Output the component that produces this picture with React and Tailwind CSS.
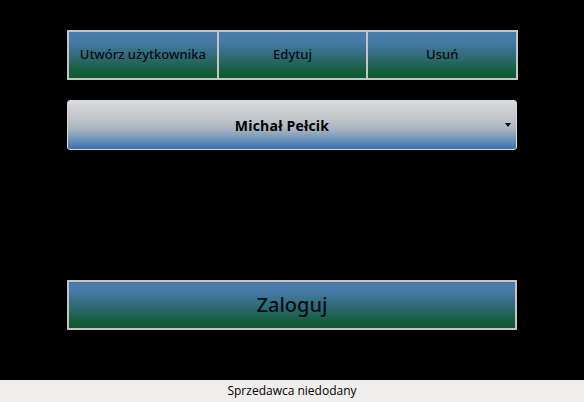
import React from "react";

const green = "bg-[linear-gradient(to_bottom,#4a7bac_0%,#467aa8_20%,#2f6a72_55%,#145c3e_85%,#0e5a32_100%)]";

export default function App() {
  return (
    <div
      className="w-[584px] h-[402px] bg-black flex flex-col"
      style={{ fontFamily: '"Open Sans", "Noto Sans", sans-serif' }}
    >
      <div className="flex-1 flex flex-col pl-[67px] pt-[30px]">
        {/* Zakładki */}
        <div className="flex w-[451px] h-[50px]">
          {["Utwórz użytkownika", "Edytuj", "Usuń"].map((t, i) => (
            <button
              key={t}
              className={`${green} flex-1 flex items-center justify-center border-2 border-[#c4c4c4] ${i > 0 ? "border-l-0" : ""} font-['Noto_Sans',sans-serif] text-[13px] font-medium text-[#050d14]`}
            >
              {t}
            </button>
          ))}
        </div>

        {/* Wybór użytkownika */}
        <div className="mt-[20px] w-[450px] h-[50px] relative flex items-center justify-center pr-[20px] rounded-[3px] border border-[#d6d8da] bg-[linear-gradient(to_bottom,#d9dbdd_0%,#c3c6c9_35%,#a5b3bf_60%,#6e93bb_80%,#3a70ae_100%)]">
          <span className="text-[14px] font-bold tracking-[0.2px] text-black">Michał Pełcik</span>
          <span className="absolute right-[5px] top-[22px] w-0 h-0 border-l-[3.5px] border-r-[3.5px] border-t-[4px] border-l-transparent border-r-transparent border-t-black" />
        </div>

        {/* Logowanie */}
        <button
          className={`${green} mt-[130px] w-[450px] h-[50px] flex items-center justify-center border-2 border-[#c4c4c4] font-['Noto_Sans',sans-serif] text-[20px] font-medium text-[#050d14]`}
        >
          Zaloguj
        </button>
      </div>

      {/* Pasek stanu */}
      <div className="h-[22px] bg-[#f0eded] flex items-center justify-center text-[12px] text-black">
        Sprzedawca niedodany
      </div>
    </div>
  );
}
